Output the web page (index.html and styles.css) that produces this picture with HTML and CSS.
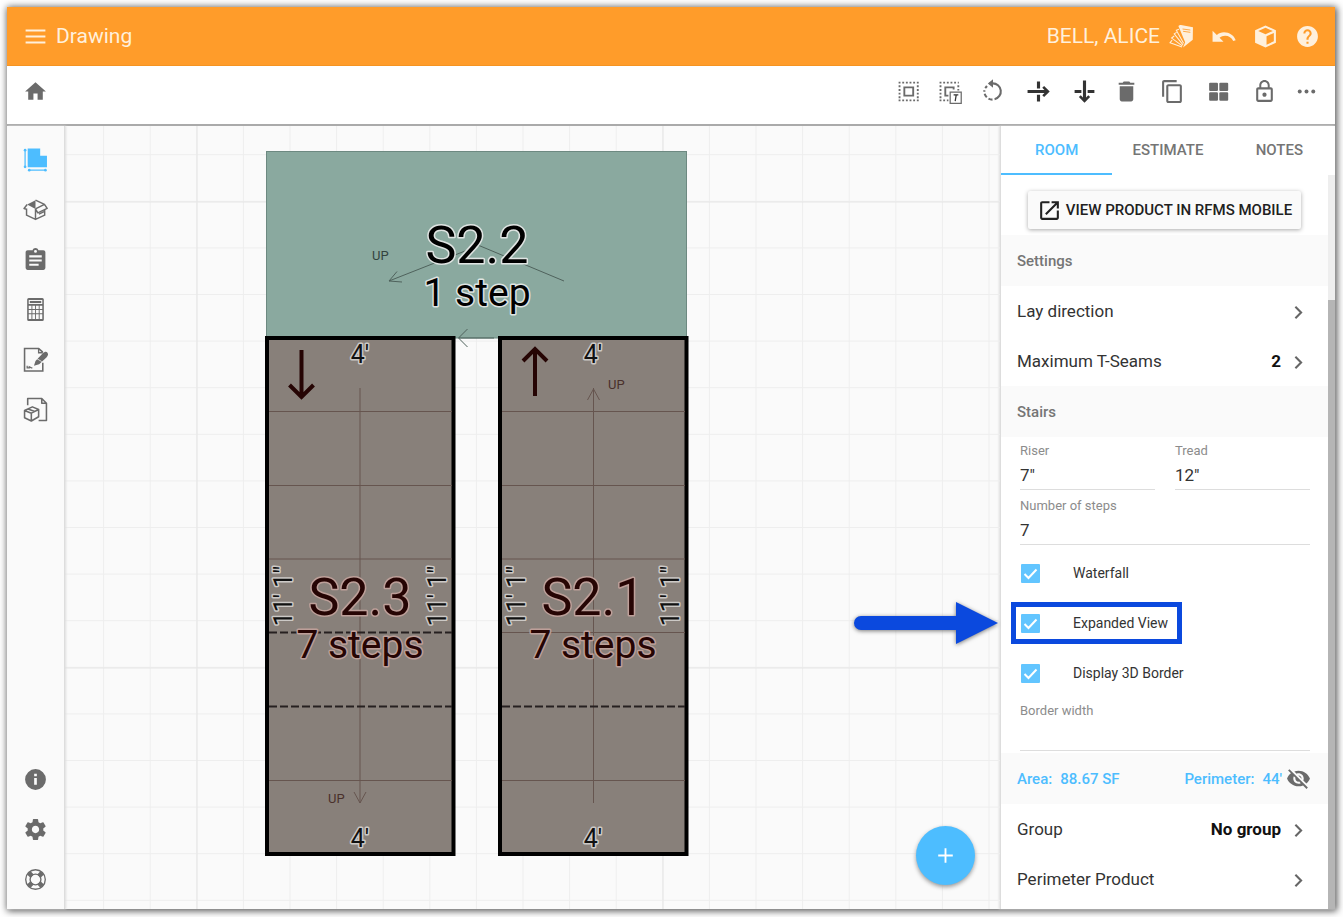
FILE: index.html
```html
<!DOCTYPE html>
<html lang="en">
<head>
<meta charset="utf-8">
<title>Drawing</title>
<link rel="stylesheet" href="styles.css">
</head>
<body>
<div class="app">
  <header class="appbar">
    <button class="icon-btn" aria-label="Menu"><svg viewBox="0 0 24 24"><path d="M2.500 6.200h19M2.500 12h19M2.500 17.800h19" fill="none" stroke="currentColor" stroke-width="2"/></svg></button>
    <h1 class="title">Drawing</h1>
    <span class="customer">BELL, ALICE</span>
    <div class="icons">
      <button class="icon-btn" aria-label="Samples"><svg viewBox="0 0 24 24"><path d="M10.500 1h1l11.500 2-.2 12L13.500 22.500l2-5L9 2z"/><path d="M13 4.800l7.500 1M13.500 7l7 1" stroke="#ff9c2a" stroke-width=".8" fill="none"/><path d="M9.500 5L7 6l7 12.500M7.300 8L5 9.500 13.500 20M5 11.500L2.500 13.500 12.800 21M3 15.500L1 18l11.500 4" fill="none" stroke="currentColor" stroke-width="1"/></svg></button>
      <button class="icon-btn" aria-label="Undo"><svg viewBox="0 0 24 24"><path d="M12.500 8c-2.650 0-5.050.99-6.900 2.600L1.500 6.500V17H12l-3.800-3.900c1.400-1.200 3.300-1.900 5.300-1.900 3.500 0 6.500 1.900 7.800 5.100l2.400-.8C22 11 17.600 8 12.500 8z"/></svg></button>
      <button class="icon-btn" aria-label="3D view"><svg viewBox="0 0 24 24"><path d="M12 1.500L2 6v12l10 4.500L22 18V6zM12 3.600l7 3.100-7 3.200-7-3.200zm1 8.200l7-3.200v8l-7 3.200z" fill-rule="evenodd"/></svg></button>
      <button class="icon-btn" aria-label="Help"><svg viewBox="0 0 24 24"><path d="M12 2C6.480 2 2 6.480 2 12s4.480 10 10 10 10-4.480 10-10S17.520 2 12 2zm1 17h-2v-2h2v2zm2.070-7.750l-.9.920C13.450 12.900 13 13.500 13 15h-2v-.5c0-1.100.45-2.100 1.170-2.830l1.240-1.260c.37-.36.59-.86.59-1.410 0-1.100-.9-2-2-2s-2 .9-2 2H8c0-2.210 1.790-4 4-4s4 1.790 4 4c0 .88-.36 1.680-.93 2.250z"/></svg></button>
    </div>
  </header>

  <div class="toolbar">
    <button class="icon-btn" aria-label="Home"><svg viewBox="0 0 24 24"><path d="M10 20v-6h4v6h5v-8h3L12 3 2 12h3v8z"/></svg></button>
    <div class="icons">
      <button class="icon-btn" aria-label="Select all"><svg viewBox="0 0 24 24"><g fill="none" stroke="currentColor"><path d="M2.500 3.500H22M2.500 20.500H22" stroke-width="1.800" stroke-dasharray="1.800 1.700"/><path d="M3.400 6.100V20M20.900 6.100V20" stroke-width="1.800" stroke-dasharray="1.800 1.700"/><path d="M8 8h8.500v8H8z" stroke-width="1.800"/></g></svg></button>
      <button class="icon-btn" aria-label="Select text"><svg viewBox="0 0 24 24"><g fill="none" stroke="currentColor"><path d="M1.500 3.500H20M1.500 20.500H10" stroke-width="1.800" stroke-dasharray="1.800 1.700"/><path d="M2.400 6.100V20M19.500 6.100V11" stroke-width="1.800" stroke-dasharray="1.800 1.700"/><path d="M15 10V8H7v8h3" stroke-width="1.800"/><path d="M11.700 12.700h10.600v10.600H11.700z" stroke-width="1.200"/><path d="M15 15.300h4.500M17.500 15.300l-1 6" stroke="#333" stroke-width="1.200"/></g></svg></button>
      <button class="icon-btn spaced" aria-label="Rotate"><svg viewBox="0 0 24 24"><g fill="none" stroke="currentColor" stroke-width="2"><path d="M9 4.200h3a7.700 7.700 0 0 1 2 15.200"/><path d="M12 19.800a7.700 7.700 0 0 1-7.700-9" stroke-dasharray="4 2"/><path d="M5 8.700l1.700-2"/></g><path d="M12.500.3v8L7.500 4.200z"/></svg></button>
      <button class="icon-btn dark spaced" aria-label="Flip horizontally"><svg viewBox="0 0 24 24"><g fill="none" stroke="currentColor" stroke-width="3"><path d="M1.500 12H21M12 2.500V9M12 15v6.500"/><path d="M16.500 7.500L21 12l-4.500 4.500" stroke-width="2.500"/></g></svg></button>
      <button class="icon-btn dark" aria-label="Flip vertically"><svg viewBox="0 0 24 24"><g fill="none" stroke="currentColor" stroke-width="3"><path d="M12 1.500V21M2.500 12H9M15 12h6.500"/><path d="M7.500 16.500L12 21l4.500-4.500" stroke-width="2.500"/></g></svg></button>
      <button class="icon-btn spaced" aria-label="Delete"><svg viewBox="0 0 24 24"><path d="M5.500 19.500c0 1.100.9 2 2 2h9c1.100 0 2-.9 2-2V7h-13zM19.500 3.500h-3.800L14.700 2.500H9.300l-1 1H4.500v2h15z"/></svg></button>
      <button class="icon-btn spaced" aria-label="Copy"><svg viewBox="0 0 24 24"><path d="M16 1H4c-1.100 0-2 .9-2 2v14h2V3h12V1zm3 4H8c-1.100 0-2 .9-2 2v14c0 1.100.9 2 2 2h11c1.100 0 2-.9 2-2V7c0-1.100-.9-2-2-2zm0 16H8V7h11v14z"/></svg></button>
      <button class="icon-btn spaced" aria-label="Layout"><svg viewBox="0 0 24 24"><rect x="3" y="3.500" width="8.500" height="8" rx="1"/><rect x="12.800" y="3.500" width="8.500" height="8" rx="1"/><rect x="3" y="12.800" width="8.500" height="8" rx="1"/><rect x="12.800" y="12.800" width="8.500" height="8" rx="1"/></svg></button>
      <button class="icon-btn" aria-label="Lock"><svg viewBox="0 0 24 24"><path d="M12 17c1.100 0 2-.9 2-2s-.9-2-2-2-2 .9-2 2 .9 2 2 2zm6-9h-1V6c0-2.760-2.240-5-5-5S7 3.240 7 6v2H6c-1.100 0-2 .9-2 2v10c0 1.100.9 2 2 2h12c1.100 0 2-.9 2-2V10c0-1.100-.9-2-2-2zM8.900 6c0-1.710 1.390-3.100 3.100-3.100s3.100 1.390 3.100 3.100v2H8.900V6zM18 20H6V10h12v10z"/></svg></button>
      <button class="icon-btn" aria-label="More"><svg viewBox="0 0 24 24"><circle cx="5.500" cy="12" r="1.900"/><circle cx="12" cy="12" r="1.900"/><circle cx="18.500" cy="12" r="1.900"/></svg></button>
    </div>
  </div>

  <main class="workspace">
    <nav class="sidebar">
      <button class="icon-btn active" aria-label="Rooms"><svg viewBox="0 0 24 24"><path d="M4.500 1.500h12v7H23V19.500H4.500z"/><path d="M2 3v16M5.500 22.200h16" fill="none" stroke="currentColor" stroke-width="1.200"/><circle cx="2" cy="3" r="1.300"/><circle cx="2" cy="19" r="1.300"/><circle cx="6" cy="22.200" r="1.300"/><circle cx="21.500" cy="22.200" r="1.300"/></svg></button>
      <button class="icon-btn" aria-label="Products"><svg viewBox="0 0 24 24"><g fill="none" stroke="currentColor" stroke-width="1.400" stroke-linejoin="round"><path d="M3.400 11v6.400L12 21.500l8.800-4.100v-5M12 11.400v10M12 3l8.600 4L12 11.400M4 7.200L1 11l2.400.8M20.600 7l2.600 4-9 4.200L12 11.400M20.800 13.800l-5.500 2.600"/></g><path d="M12 3v8.400L4 7.200z"/></svg></button>
      <button class="icon-btn" aria-label="Worksheet"><svg viewBox="0 0 24 24"><path d="M19.500 3h-4.700C14.400 1.800 13.300 1 12 1s-2.400.8-2.800 2H4.500c-1.100 0-2 .9-2 2v15c0 1.100.9 2 2 2h15c1.100 0 2-.9 2-2V5c0-1.100-.9-2-2-2zM12 2.800a1.400 1.400 0 1 1 0 2.800 1.400 1.400 0 0 1 0-2.800zM15 18H6v-2h9v2zm3-4H6v-2h12v2zm0-4H6V8h12v2z" fill-rule="evenodd"/></svg></button>
      <button class="icon-btn" aria-label="Calculator"><svg viewBox="0 0 24 24"><path d="M5.500 1h13A1.500 1.500 0 0 1 20 2.500v19a1.500 1.500 0 0 1-1.500 1.500h-13A1.500 1.500 0 0 1 4 21.500v-19A1.500 1.500 0 0 1 5.500 1z"/><path d="M5.500 2.800h13v4h-13zM5.500 8.500h2.600v3H5.500zM9 8.500h2.600v3H9zM12.500 8.500h2.600v3h-2.600zM16 8.500h2.500v3H16zM5.500 12.500h2.600v3H5.500zM9 12.500h2.600v3H9zM12.500 12.500h2.600v3h-2.600zM16 12.500h2.500v3H16zM5.500 16.500h2.600v4.500H5.500zM9 16.500h2.600v4.500H9zM12.500 16.500h2.600v4.500h-2.600zM16 16.500h2.500v4.500H16z" fill="#fafafa"/><path d="M6.500 3.800h11v2h-11z"/></svg></button>
      <button class="icon-btn" aria-label="Notes and signature"><svg viewBox="0 0 24 24"><path d="M19 15v8H1.500V1.500H15L19 5" fill="none" stroke="currentColor" stroke-width="1.500"/><path d="M15 1.500v4h4" fill="none" stroke="currentColor" stroke-width="1.300"/><path d="M23.500 5.500c-1-1.500-3-.8-4.500.5l-7 7.500-1.500 4.500 5-1.500 7-6.500c1.500-1.500 2-3 1-4.500z"/><path d="M13 11l5 3" stroke="#fafafa" stroke-width=".7"/><path d="M4 18v2h2v-1l2 1h1" fill="none" stroke="currentColor" stroke-width="1.200"/></svg></button>
      <button class="icon-btn" aria-label="Product report"><svg viewBox="0 0 24 24"><g fill="none" stroke="currentColor" stroke-width="1.500" stroke-linejoin="round"><path d="M4.500 8V1.500H18L22.500 6v16.500H15M18 1.500V6h4.500"/><path d="M1.500 13L9 9.500l6 2.500v7l-7 4-6.500-3zM1.500 13L8 15.500l7-3.500M8 15.500V23M4.800 11.500l6.500 2.500"/></g></svg></button>
      <div class="sidebar-foot">
        <button class="icon-btn" aria-label="Information"><svg viewBox="0 0 24 24"><path d="M12 2a10 10 0 1 0 0 20 10 10 0 0 0 0-20zm1.300 15h-2.600v-6.500h2.600zm0-8.200h-2.600V6.500h2.600z" fill-rule="evenodd"/></svg></button>
        <button class="icon-btn" aria-label="Settings"><svg viewBox="0 0 24 24"><path d="M19.430 12.980c.04-.32.07-.64.07-.98s-.03-.66-.07-.98l2.110-1.650c.19-.15.24-.42.120-.64l-2-3.460c-.12-.22-.39-.3-.61-.22l-2.490 1c-.52-.4-1.080-.73-1.690-.98l-.38-2.650C14.460 2.180 14.250 2 14 2h-4c-.25 0-.46.18-.49.42l-.38 2.650c-.61.25-1.170.59-1.690.98l-2.490-1c-.23-.09-.49 0-.61.22l-2 3.460c-.13.22-.07.49.120.64l2.110 1.650c-.04.32-.07.65-.07.98s.03.66.07.98l-2.110 1.650c-.19.15-.24.42-.12.64l2 3.460c.12.22.39.3.61.22l2.490-1c.52.4 1.080.73 1.690.98l.38 2.650c.03.24.24.42.49.42h4c.25 0 .46-.18.49-.42l.38-2.650c.61-.25 1.170-.59 1.690-.98l2.490 1c.23.09.49 0 .61-.22l2-3.460c.12-.22.07-.49-.12-.64l-2.110-1.650zM12 15.500c-1.930 0-3.500-1.570-3.500-3.500s1.570-3.500 3.500-3.500 3.500 1.570 3.500 3.500-1.570 3.500-3.500 3.500z"/></svg></button>
        <button class="icon-btn" aria-label="Support"><svg viewBox="0 0 24 24"><g fill="none" stroke="currentColor"><circle cx="12" cy="12" r="9.400" stroke-width="1.300"/><circle cx="12" cy="12" r="5.200" stroke-width="1.300"/><path d="M5.500 5.500l3.200 3.200M15.300 15.300l3.200 3.200M18.500 5.500l-3.200 3.200M8.700 15.300l-3.200 3.200" stroke-width="4.500"/></g></svg></button>
      </div>
    </nav>

    <section class="canvas" aria-label="Floor plan">
      <svg class="plan" viewBox="65 126 936 783" preserveAspectRatio="xMinYMin slice">
        <defs>
          <pattern id="minor" x="57.500" y="62" width="46.600" height="46.600" patternUnits="userSpaceOnUse"><path d="M46.600 0V46.600M0 46.600H46.600" class="grid-minor"/></pattern>
          <pattern id="major" x="-36" y="-31" width="466" height="466" patternUnits="userSpaceOnUse"><path d="M233 0V466M0 233H466" class="grid-major"/></pattern>
        </defs>
        <rect x="65" y="126" width="2000" height="2000" fill="url(#minor)"/>
        <rect x="65" y="126" width="2000" height="2000" fill="url(#major)"/>

        <rect class="landing" x="266.500" y="151.500" width="420" height="186.500"/>
        <path class="thin" d="M564 281L479 245.500 389 281M397 271.500L389 281l13 1M494 338h-35M467.500 329l-9 9 9 9"/>
        <text class="up" x="372" y="260">UP</text>
        <text class="name" x="477" y="263">S2.2</text>
        <text class="steps" x="477" y="306">1 step</text>

        <rect class="flight" x="267" y="338" width="186.500" height="516"/>
        <path class="tread" d="M269 411.500h183M269 485.500h183M269 559h183M269 780.500h183M360 388v415M354 792l6 11 6-11"/>
        <path class="seam" d="M269 632.500h183M269 706.500h183"/>
        <path class="lay" d="M301.500 350v46M289.500 385l12 12 12-12"/>
        <text class="up brown" x="328" y="803">UP</text>
        <text class="dim" x="360" y="363">4'</text>
        <text class="dim" x="360" y="847">4'</text>
        <text class="dim" transform="translate(292 596) rotate(-90)">11' 1"</text>
        <text class="dim" transform="translate(446 596) rotate(-90)">11' 1"</text>
        <text class="name red" x="360" y="615">S2.3</text>
        <text class="steps red" x="360" y="658">7 steps</text>

        <rect class="flight" x="500" y="338" width="186.500" height="516"/>
        <path class="tread" d="M502 411.500h183M502 485.500h183M502 559h183M502 632.500h183M502 780.500h183M593.500 803V388M587.500 400l6-11 6 11"/>
        <path class="seam" d="M502 706.500h183"/>
        <path class="lay" d="M535 396v-46M523 361l12-12 12 12"/>
        <text class="up brown" x="608" y="389">UP</text>
        <text class="dim" x="593" y="363">4'</text>
        <text class="dim" x="593" y="847">4'</text>
        <text class="dim" transform="translate(525 596) rotate(-90)">11' 1"</text>
        <text class="dim" transform="translate(679 596) rotate(-90)">11' 1"</text>
        <text class="name red" x="593" y="615">S2.1</text>
        <text class="steps red" x="593" y="658">7 steps</text>
      </svg>
      <button class="fab" aria-label="Add"><svg viewBox="0 0 24 24"><path d="M12 5v14M5 12h14" fill="none" stroke="currentColor" stroke-width="1.800"/></svg></button>
    </section>

    <aside class="panel">
      <div class="tabs" role="tablist">
        <button class="tab selected" role="tab" aria-selected="true">ROOM</button>
        <button class="tab" role="tab">ESTIMATE</button>
        <button class="tab" role="tab">NOTES</button>
      </div>
      <div class="scroller">
        <div class="content">
          <div class="product">
            <button class="view-btn"><svg viewBox="0 0 24 24"><path d="M19 19H5V5h7V3H5c-1.110 0-2 .9-2 2v14c0 1.100.89 2 2 2h14c1.100 0 2-.9 2-2v-7h-2v7zM14 3v2h3.590l-9.830 9.830 1.410 1.410L19 6.410V10h2V3h-7z"/></svg>VIEW PRODUCT IN RFMS MOBILE</button>
          </div>
          <h2 class="subhead">Settings</h2>
          <button class="row"><span>Lay direction</span><svg class="chevron" viewBox="0 0 24 24"><path d="M9 7.500l5.500 5.500L9 18.500"/></svg></button>
          <button class="row"><span>Maximum T-Seams</span><b>2</b><svg class="chevron" viewBox="0 0 24 24"><path d="M9 7.500l5.500 5.500L9 18.500"/></svg></button>
          <h2 class="subhead">Stairs</h2>
          <div class="fields">
            <label class="field">Riser<input type="text" value="7&quot;"></label>
            <label class="field">Tread<input type="text" value="12&quot;"></label>
            <label class="field wide">Number of steps<input type="text" value="7"></label>
          </div>
          <label class="check"><input type="checkbox" checked>Waterfall</label>
          <label class="check"><input type="checkbox" checked>Expanded View</label>
          <label class="check"><input type="checkbox" checked>Display 3D Border</label>
          <div class="fields last">
            <label class="field wide">Border width<input type="text" value=""></label>
          </div>
          <div class="totals">
            <span>Area:</span><span>88.67 SF</span>
            <span class="perimeter">Perimeter:</span><span>44'</span>
            <button class="icon-btn eye" aria-label="Hide measurements"><svg viewBox="0 0 24 24"><path d="M12 7c2.760 0 5 2.240 5 5 0 .65-.13 1.260-.36 1.830l2.920 2.920c1.510-1.260 2.700-2.890 3.430-4.750-1.730-4.390-6-7.500-11-7.500-1.400 0-2.740.25-3.980.7l2.160 2.160C10.740 7.130 11.350 7 12 7zM2 4.270l2.280 2.280.46.46C3.080 8.300 1.780 10.020 1 12c1.730 4.390 6 7.500 11 7.500 1.550 0 3.030-.3 4.380-.84l.42.42L19.730 22 21 20.730 3.270 3 2 4.270zM7.530 9.800l1.550 1.550c-.05.21-.08.43-.08.65 0 1.660 1.340 3 3 3 .22 0 .44-.03.65-.08l1.550 1.550c-.67.33-1.410.53-2.200.53-2.760 0-5-2.240-5-5 0-.79.2-1.530.53-2.200zm4.310-.78l3.150 3.150.02-.16c0-1.660-1.340-3-3-3l-.17.01z"/></svg></button>
          </div>
          <button class="row"><span>Group</span><b>No group</b><svg class="chevron" viewBox="0 0 24 24"><path d="M9 7.500l5.500 5.500L9 18.500"/></svg></button>
          <button class="row"><span>Perimeter Product</span><svg class="chevron" viewBox="0 0 24 24"><path d="M9 7.500l5.500 5.500L9 18.500"/></svg></button>
        </div>
        <div class="track"><div class="thumb"></div></div>
      </div>
    </aside>

    <div class="callout">
      <svg class="pointer" viewBox="0 0 144 42"><path d="M7 14h95V0l42 21-42 21V28H7A7 7 0 0 1 7 14z"/></svg>
      <div class="outline"></div>
    </div>
  </main>
</div>
</body>
</html>
```
FILE: styles.css
```css
* { box-sizing: border-box; }

body {
  margin: 0;
  padding: 7px 8px 8px 7px;
  height: 100vh;
  background: #fff;
  color: #333;
  font-family: Roboto, "Liberation Sans", sans-serif;
  font-size: 17px;
}

button, input { font: inherit; color: inherit; }
button { border: 0; padding: 0; background: none; }

.app {
  display: flex;
  flex-direction: column;
  height: 100%;
  overflow: visible;
  box-shadow: 1px 1px 7px 1px #555;
}

.icon-btn { display: flex; flex: none; color: #6b6b6b; }
.icon-btn svg { width: 25px; height: 25px; fill: currentColor; }
.icons { display: flex; align-items: center; gap: 17px; }
.spaced { margin-right: 4px; }

.appbar {
  display: flex;
  flex: none;
  align-items: center;
  height: 59px;
  padding: 0 15px 0 16px;
  background: #ff9c2a;
  border-bottom: 1px solid #f59422;
  color: #fff0dc;
  font-size: 21px;
}
.appbar .icon-btn { color: #fff0dc; }
.title { margin: 0 0 0 8px; font-size: 21px; font-weight: 400; }
.customer { margin: 0 9px 0 auto; }

.toolbar {
  display: flex;
  flex: none;
  align-items: center;
  justify-content: space-between;
  height: 60px;
  padding: 0 16px 8px;
  background: #fff;
  border-bottom: 2px solid #aaa;
}
.toolbar .dark { color: #333; }

.workspace { position: relative; display: flex; flex: 1; min-height: 0; background: #fafafa; }

.sidebar {
  display: flex;
  flex: none;
  flex-direction: column;
  align-items: center;
  gap: 25px;
  width: 58px;
  padding: 21px 1px 17px 0;
  background: #fafafa;
  border-right: 1px solid #ddd;
  box-shadow: 1px 0 2px #ddd;
  z-index: 1;
}
.sidebar .active { color: #4dbdff; }
.sidebar-foot { display: flex; flex-direction: column; gap: 25px; margin-top: auto; }

.canvas { position: relative; flex: 1; min-width: 0; overflow: hidden; }
.plan { display: block; width: 100%; height: 100%; }
.grid-minor { fill: none; stroke: #eee; stroke-width: 2; }
.grid-major { fill: none; stroke: #e6e6e6; stroke-width: 1; }
.landing { fill: #8aa99f; stroke: #6d8981; }
.flight { fill: #88807a; stroke: #000; stroke-width: 4; }
.thin { fill: none; stroke: #4f625c; }
.tread { fill: none; stroke: #66554f; }
.seam { fill: none; stroke: #262020; stroke-width: 2; stroke-dasharray: 8 3; }
.lay { fill: none; stroke: #260504; stroke-width: 4; }
.up { font-size: 13px; fill: #33433e; }
.brown { fill: #4a302b; }
.name, .steps, .dim {
  text-anchor: middle;
  fill: #000;
  stroke: #dfe4e2;
  stroke-width: 3px;
  stroke-linejoin: round;
  paint-order: stroke;
}
.name { font-size: 52px; }
.steps { font-size: 39px; }
.dim { font-size: 25px; fill: #111; stroke: #ccc9c6; }
.red { fill: #260504; stroke: #bd9f99; }

.fab {
  position: absolute;
  right: 25px;
  bottom: 24px;
  display: flex;
  align-items: center;
  justify-content: center;
  width: 59px;
  height: 59px;
  border-radius: 50%;
  background: #4dbdff;
  color: #fff;
  box-shadow: 0 2px 4px #999;
}
.fab svg { width: 25px; height: 25px; }

.panel {
  display: flex;
  flex: none;
  flex-direction: column;
  width: 335px;
  background: #fff;
  border-left: 1px solid #ddd;
  box-shadow: -1px 0 2px #ddd;
}
.tabs { display: flex; flex: none; height: 49px; }
.tab { flex: 1; font-size: 15px; font-weight: 500; color: #757575; border-bottom: 2px solid transparent; }
.tab.selected { color: #4dbdff; border-color: #4dbdff; }

.scroller { display: flex; flex: 1; min-height: 0; overflow: hidden; }
.content { flex: 1; min-width: 0; }
.track { width: 7px; padding-top: 125px; background: #eee; }
.thumb { height: 100%; background: #b5b5b5; }

.product { display: flex; justify-content: center; padding: 16px 0 6px; }
.view-btn {
  display: flex;
  align-items: center;
  gap: 4px;
  height: 38px;
  padding: 0 9px;
  border-radius: 2px;
  background: #fafafa;
  color: #212121;
  font-size: 15px;
  font-weight: 500;
  white-space: nowrap;
  box-shadow: 0 1px 4px #aaa;
}
.view-btn svg { width: 25px; height: 25px; fill: currentColor; }

.subhead {
  display: flex;
  align-items: center;
  height: 51px;
  margin: 0;
  padding: 0 16px;
  background: #fafafa;
  color: #757575;
  font-size: 15px;
  font-weight: 500;
}
.row {
  display: flex;
  align-items: center;
  gap: 5px;
  width: 100%;
  height: 50px;
  padding: 0 17px 0 16px;
  text-align: left;
}
.row span { flex: 1; }
.row b { color: #111; font-weight: 700; }
.chevron { width: 25px; height: 25px; fill: none; stroke: #666; stroke-width: 2; }

.fields {
  display: grid;
  grid-template-columns: 1fr 1fr;
  column-gap: 20px;
  padding: 6px 18px 0 19px;
}
.field { display: flex; flex-direction: column; height: 55px; color: #8c8c8c; font-size: 13px; line-height: 15px; }
.field input {
  width: 100%;
  height: 32px;
  padding: 2px 0 0;
  border: 0;
  border-bottom: 1px solid #ddd;
  background: none;
  color: #333;
  font-size: 17px;
}
.wide { grid-column: 1 / -1; height: 50px; }
.last { padding-top: 5px; }
.last input { margin-top: 4px; height: 29px; }

.check { display: flex; align-items: center; gap: 33px; height: 50px; padding: 0 20px; font-size: 14px; }
.check input {
  appearance: none;
  width: 19px;
  height: 19px;
  margin: 0;
  border-radius: 1px;
  background: #62c5ff url("data:image/svg+xml,%3Csvg xmlns='http://www.w3.org/2000/svg' viewBox='0 0 19 19'%3E%3Cpath d='M3.500 10l4 4 8-8.500' fill='none' stroke='white' stroke-width='2'/%3E%3C/svg%3E");
}

.totals {
  display: flex;
  align-items: center;
  gap: 8px;
  height: 51px;
  padding: 0 17px 0 16px;
  background: #fafafa;
  color: #4dbdff;
  font-size: 15px;
  font-weight: 500;
}
.perimeter { margin-left: auto; }
.eye { margin-left: -4px; }

.callout {
  position: absolute;
  top: 476px;
  right: 153px;
  display: flex;
  gap: 13px;
  pointer-events: none;
  z-index: 2;
}
.pointer { width: 144px; height: 42px; fill: #0b49de; overflow: visible; filter: drop-shadow(0 1px 2px #777); }
.outline { width: 171px; height: 42px; border: 5px solid #0b49de; }
```
